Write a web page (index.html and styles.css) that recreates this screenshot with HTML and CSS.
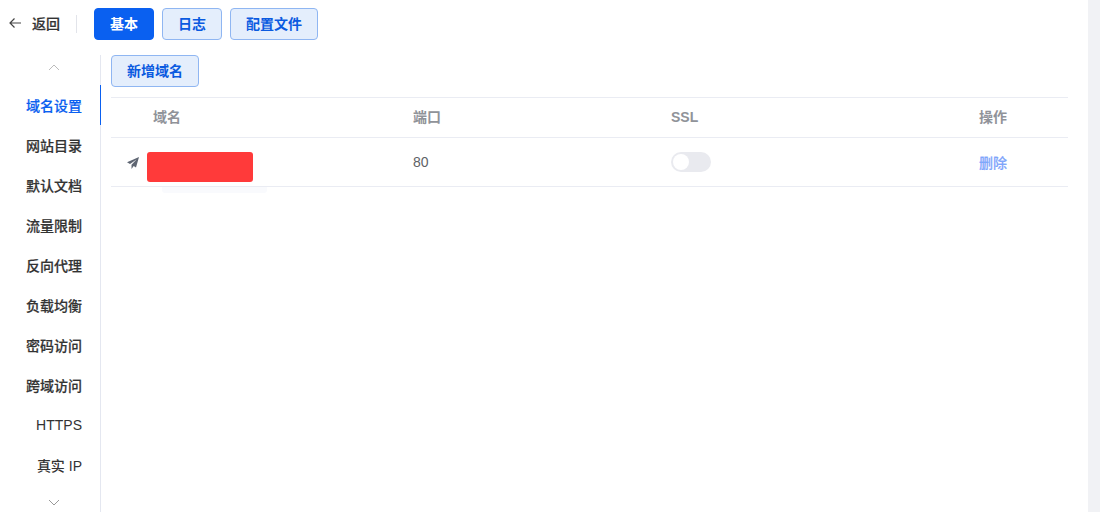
FILE: index.html
```html
<!DOCTYPE html>
<html lang="zh-CN">
<head>
  <meta charset="UTF-8" />
  <title>站点设置</title>
  <link rel="stylesheet" href="styles.css">
</head>
<body>

<div class="page">
  <header class="topbar">
    <a class="back">
      <svg class="back-icon" width="14" height="14" viewBox="0 0 14 14"><path d="M13 7H2M6.500 2.500 2 7l4.500 4.500" fill="none" stroke="#444" stroke-width="1.200"/></svg>
      <span>返回</span>
    </a>
    <span class="divider"></span>
    <button class="btn btn-solid">基本</button>
    <button class="btn">日志</button>
    <button class="btn">配置文件</button>
  </header>

  <div class="main">
    <nav class="side">
      <div class="arrow">
        <svg width="12" height="7" viewBox="0 0 12 7"><path d="M1 6l5-5 5 5" fill="none" stroke="#bbb" stroke-width="1"/></svg>
      </div>
      <a class="tab active">域名设置</a>
      <a class="tab">网站目录</a>
      <a class="tab">默认文档</a>
      <a class="tab">流量限制</a>
      <a class="tab">反向代理</a>
      <a class="tab">负载均衡</a>
      <a class="tab">密码访问</a>
      <a class="tab">跨域访问</a>
      <a class="tab plain latin">HTTPS</a>
      <a class="tab plain">真实 IP</a>
      <div class="arrow arrow-down">
        <svg width="12" height="7" viewBox="0 0 12 7"><path d="M1 1l5 5 5-5" fill="none" stroke="#999" stroke-width="1"/></svg>
      </div>
    </nav>

    <section class="content">
      <button class="btn">新增域名</button>
      <div class="table">
        <div class="row head">
          <div class="col-name">域名</div>
          <div class="col-port">端口</div>
          <div class="col-ssl">SSL</div>
          <div class="col-op">操作</div>
        </div>
        <div class="row body">
          <div class="col-name">
            <svg class="send" width="12" height="12" viewBox="0 0 12 12"><path d="M12 0 0 5.200l3 1.700L9.500 2.500 4.500 7.800V12l2.200-3 2.300 1.400z" fill="#5f6673"/></svg>
            <span class="mask"></span>
          </div>
          <div class="col-port">80</div>
          <div class="col-ssl"><span class="switch"><span class="knob"></span></span></div>
          <div class="col-op"><a class="link">删除</a></div>
          <span class="tip"></span>
        </div>
      </div>
    </section>
  </div>
</div>
<div class="scrollbar"></div>

</body>
</html>
```

FILE: styles.css
```css
:root {
  --primary: #0a60f0;
  --line: #eaecf3;
  --text: #333;
}
* {
  box-sizing: border-box;
}
html, body {
  height: 100%;
}
body {
  margin: 0;
  display: flex;
  overflow: hidden;
  background: #fff;
  color: var(--text);
  font-family: "Liberation Sans", "Noto Sans CJK SC", sans-serif;
  font-size: 14px;
}
.page {
  width: 1088px;
  height: 100%;
  flex: none;
}
.scrollbar {
  flex: 1;
  background: #f1f2f5;
}
.topbar {
  display: flex;
  align-items: center;
  height: 48px;
  padding: 0 0 0 8px;
  gap: 8px;
}
.back {
  display: flex;
  align-items: center;
  gap: 10px;
  padding-bottom: 2px;
  font-weight: 500;
  -webkit-text-stroke: 0.2px currentColor;
  color: #333;
}
.divider {
  width: 1px;
  height: 18px;
  background: #e2e4ea;
  margin: 0 9px 0 8px;
}
.btn {
  height: 32px;
  padding: 0 15px 2px;
  border: 1px solid #8fb6f2;
  border-radius: 4px;
  background: #e4eefc;
  color: #0a5ae0;
  font: inherit;
  font-weight: 700;
  cursor: pointer;
}
.btn-solid {
  width: 60px;
  background: var(--primary);
  border-color: var(--primary);
  color: #fff;
}
.main {
  display: flex;
  height: 457px;
  margin-top: 7px;
}
.side {
  width: 101px;
  flex: none;
  border-right: 1px solid #e4e7f0;
  text-align: right;
}
.arrow {
  height: 30px;
  display: flex;
  justify-content: center;
  align-items: center;
  padding-left: 8px;
  padding-bottom: 6px;
}
.arrow-down {
  height: 27px;
  padding-top: 8px;
  padding-bottom: 0;
}
.tab {
  display: block;
  height: 40px;
  line-height: 42px;
  padding-right: 18px;
  font-weight: 500;
  -webkit-text-stroke: 0.2px currentColor;
  color: #333;
}
.tab.plain {
  -webkit-text-stroke: 0;
}
.tab.latin {
  line-height: 40px;
}
.tab.active {
  color: var(--primary);
  border-right: 1px solid var(--primary);
  margin-right: -1px;
}
.content {
  flex: none;
  width: 957px;
  margin-left: 10px;
}
.table {
  margin-top: 10px;
  border-top: 1px solid var(--line);
}
.row {
  display: flex;
  position: relative;
  border-bottom: 1px solid var(--line);
}
.head {
  height: 40px;
  align-items: center;
  color: #909399;
  font-weight: 700;
  line-height: 20px;
  padding-bottom: 2px;
}
.body {
  height: 49px;
  padding-top: 14px;
  color: #606266;
  line-height: 20px;
}
.col-name {
  width: 302px;
  padding-left: 42px;
  flex: none;
}
.col-port {
  width: 258px;
  flex: none;
}
.col-ssl {
  width: 308px;
  flex: none;
}
.body .col-name {
  display: flex;
  align-items: flex-start;
  padding-left: 16px;
}
.send {
  margin-top: 5px;
  margin-right: 8px;
}
.mask {
  width: 106px;
  height: 30px;
  border-radius: 3px;
  background: #ff3a3a;
}
.switch {
  display: block;
  width: 40px;
  height: 20px;
  border-radius: 10px;
  background: #e9eaef;
  padding: 2px;
}
.knob {
  display: block;
  width: 16px;
  height: 16px;
  border-radius: 50%;
  background: #fff;
}
.col-op {
  padding-top: 1px;
}
.head .col-op {
  padding-top: 0;
}
.link {
  color: #7fa6fb;
  font-weight: 500;
  -webkit-text-stroke: 0.2px currentColor;
}
.tip {
  position: absolute;
  left: 51px;
  top: 49px;
  width: 105px;
  height: 6px;
  background: #f9fafd;
  border-radius: 0 0 3px 3px;
}
```
